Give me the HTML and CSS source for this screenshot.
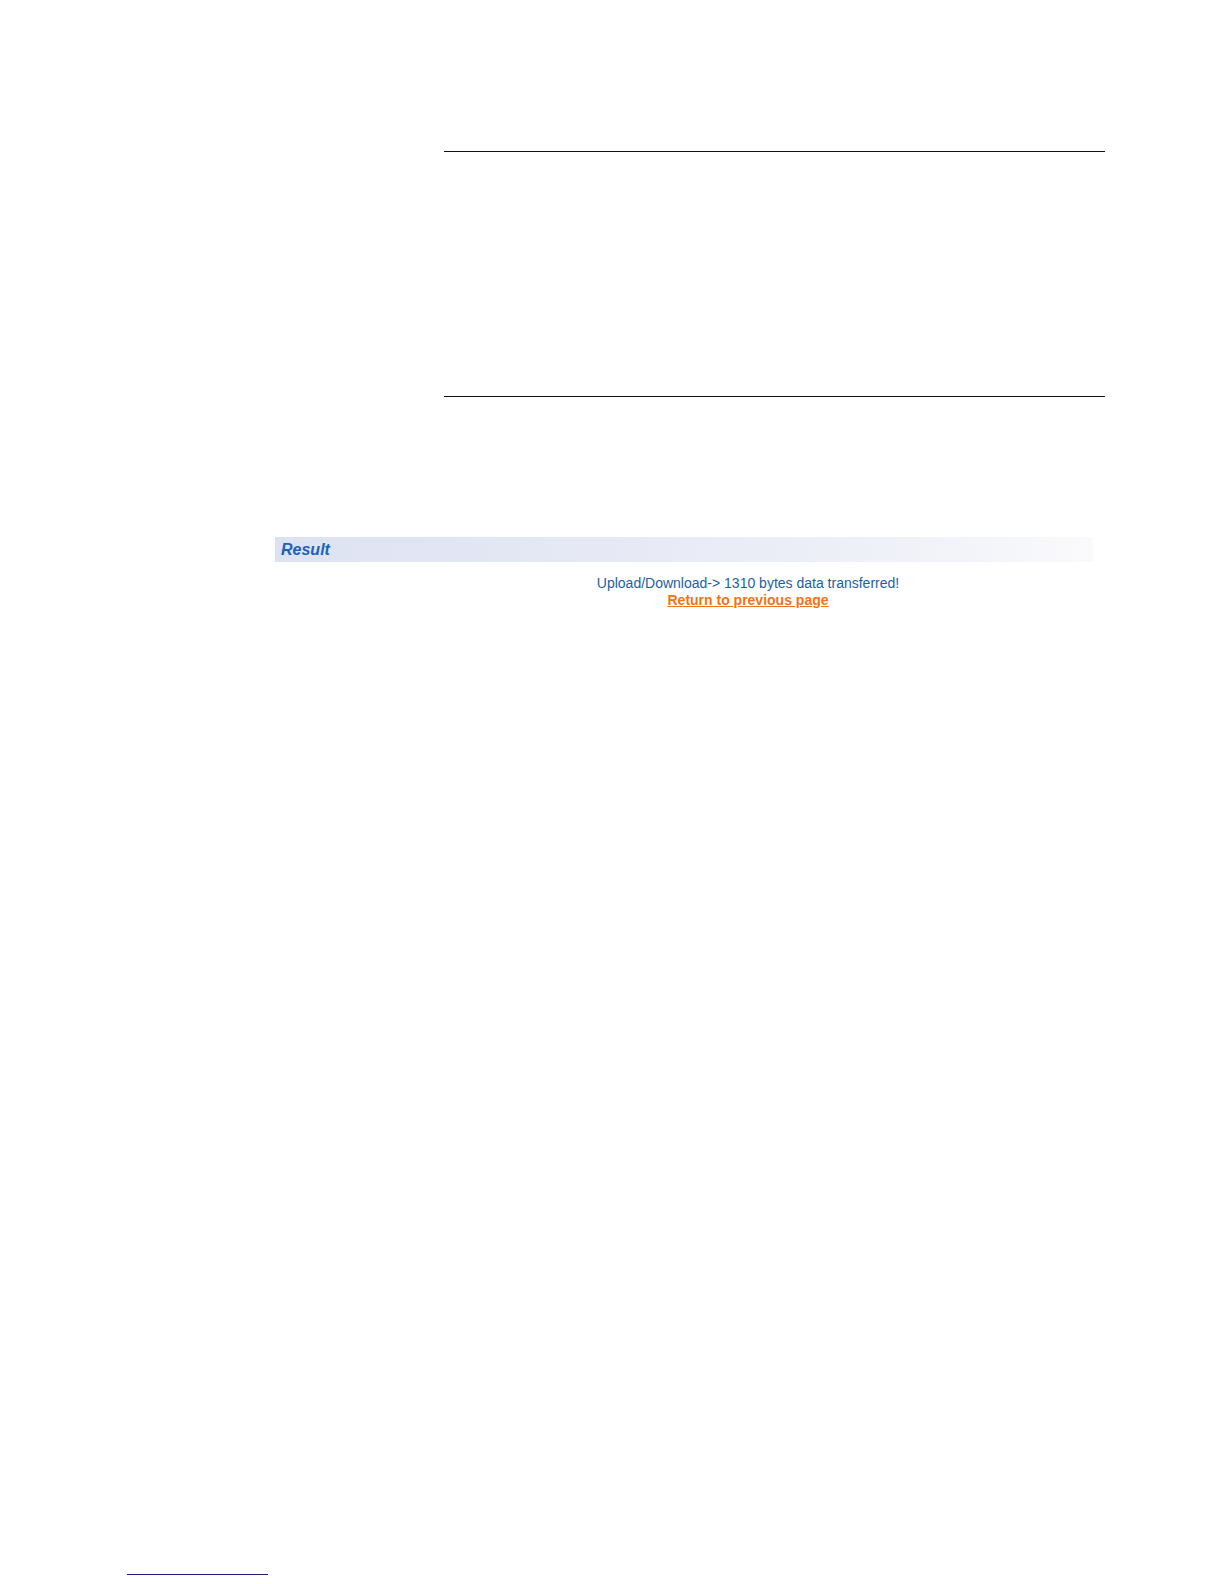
FILE: index.html
```html
<!DOCTYPE html>
<html>
<head>
<meta charset="utf-8">
<link rel="stylesheet" href="styles.css">
</head>
<body>
<div class="page">
  <div class="rule rule-top"></div>
  <div class="rule rule-bottom"></div>
  <div class="result-bar"><span class="result-title">Result</span></div>
  <div class="message">
    <div class="msg-text">Upload/Download-&gt; 1310 bytes data transferred!</div>
    <a class="msg-link" href="#">Return to previous page</a>
  </div>
  <div class="footnote-rule"></div>
</div>
</body>
</html>
```
FILE: styles.css
```css
html, body {
  margin: 0;
  padding: 0;
  background: #fff;
}
.page {
  width: 1224px;
  height: 1584px;
  position: relative;
  font-family: "Liberation Sans", Arial, sans-serif;
  overflow: hidden;
}
.rule {
  margin-left: 444px;
  width: 661px;
  height: 0;
  border-top: 1px solid #111;
}
.rule-top {
  margin-top: 151px;
}
.rule-bottom {
  margin-top: 244px;
}
.result-bar {
  margin-top: 140px;
  margin-left: 275px;
  width: 818px;
  height: 25px;
  background: linear-gradient(to right, #dde2f2 0%, #e6e9f5 40%, #eff1f8 75%, #fafafc 100%);
  display: flex;
  align-items: center;
  box-sizing: border-box;
  padding-left: 6px;
}
.result-title {
  font-size: 16px;
  font-weight: bold;
  font-style: italic;
  color: #1c62b8;
}
.message {
  margin-left: 403px;
  width: 690px;
  margin-top: 13px;
  text-align: center;
  font-size: 14px;
  line-height: 17px;
}
.msg-text {
  color: #1b5fa8;
}
.msg-link {
  color: #f07414;
  font-weight: bold;
  text-decoration: underline;
}
.footnote-rule {
  position: absolute;
  left: 127px;
  top: 1574px;
  width: 141px;
  height: 0;
  border-top: 1px solid #1c1c80;
}
```
